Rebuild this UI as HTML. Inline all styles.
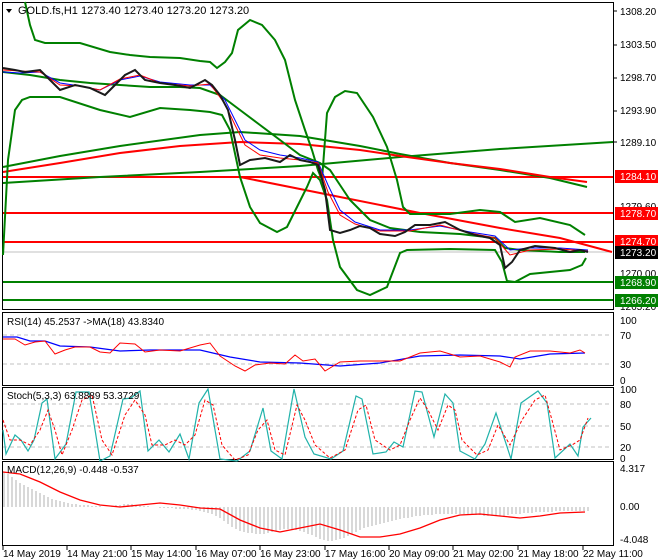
<!DOCTYPE html>
<html><head><meta charset="utf-8"><style>
html,body{margin:0;padding:0;background:#fff;}
svg{display:block;font-family:"Liberation Sans",sans-serif;}
</style></head><body>
<svg width="660" height="560" viewBox="0 0 660 560" xmlns="http://www.w3.org/2000/svg">
<rect width="660" height="560" fill="#fff"/>
<g fill="none" stroke="#000" stroke-width="1">
<rect x="2.5" y="2.5" width="611" height="307"/>
<rect x="2.5" y="312.5" width="611" height="73"/>
<rect x="2.5" y="387.5" width="611" height="72"/>
<rect x="2.5" y="461.5" width="611" height="84"/>
</g>
<g stroke="#000"><line x1="613" y1="11" x2="617" y2="11"/><line x1="613" y1="45" x2="617" y2="45"/><line x1="613" y1="78" x2="617" y2="78"/><line x1="613" y1="111" x2="617" y2="111"/><line x1="613" y1="142" x2="617" y2="142"/></g>
<line x1="3" y1="252" x2="612" y2="252" stroke="#c0c0c0"/>
<g stroke="#ff0000" stroke-width="2">
<line x1="3" y1="177" x2="613" y2="177"/>
<line x1="3" y1="213" x2="613" y2="213"/>
<line x1="3" y1="242" x2="613" y2="242"/>
</g>
<g stroke="#008000" stroke-width="2">
<line x1="3" y1="282" x2="613" y2="282"/>
<line x1="3" y1="300" x2="613" y2="300"/>
</g>
<g fill="none" stroke-width="2">
<polyline stroke="#008000" points="3,183 100,177 200,172 300,166 400,157 500,149 613,142"/>
<polyline stroke="#008000" points="3,167 60,156 120,146 200,135 240,132 300,136 360,146 400,154 450,163 500,170 550,178 587,187"/>
<polyline stroke="#ff0000" points="3,172 60,163 120,153 180,146 240,142 300,144 360,150 400,156 450,163 500,169 550,177 587,182"/>
<polyline stroke="#ff0000" points="240,177 330,195 420,213 500,228 560,238 612,252"/>
</g>
<g fill="none" stroke="#008000" stroke-width="2">
<polyline points="25,2 30,25 35,40 45,43 80,43 110,52 130,55 150,57 180,58 200,61 210,62 217,68 225,62 232,53 238,30 250,20 262,25 275,40 285,60 295,100 305,130 312,150 318,170 322,180 327,113 335,97 345,91 357,93 373,117 387,147 397,180 403,207 410,214 450,214 480,210 500,212 515,222 540,218 570,225 585,235"/>
<polyline points="3,72 30,75 60,80 90,83 120,85 150,87 180,87 200,88 220,95 240,110 260,125 280,140 300,155 320,163 330,170 340,185 350,200 360,210 370,220 390,228 420,232 460,234 495,238 505,248 520,250 560,252 585,252"/>
<polyline points="3,255 8,160 15,110 22,100 30,97 60,97 100,110 130,117 160,108 190,110 210,112 222,115 230,130 240,177 250,207 260,223 277,232 287,227 297,207 307,187 313,173 320,180 327,200 333,240 340,267 357,290 370,295 387,287 400,253 407,250 450,249 495,250 502,262 507,281 515,282 530,274 570,270 582,265 586,258"/>
</g>
<g fill="none">
<polyline stroke="#0000ff" stroke-width="1" points="3,72 20,73 40,72 60,83 80,86 100,90 120,80 140,76 160,82 190,85 210,85 225,100 235,120 245,140 260,150 280,155 300,158 318,162 328,185 340,210 355,222 380,230 410,230 440,226 470,232 495,236 510,250 530,248 560,248 588,250"/>
<polyline stroke="#ff0000" stroke-width="1" points="3,70 20,71 40,72 60,85 80,86 100,90 120,79 140,75 160,83 190,86 210,84 225,104 235,125 245,145 260,155 280,158 300,160 318,163 328,192 340,215 355,224 380,231 410,231 440,225 470,233 495,238 510,255 530,250 560,249 588,251"/>
<polyline stroke="#1a1a1a" stroke-width="2" points="3,68 15,70 25,72 40,70 50,80 60,90 75,85 90,88 105,95 115,85 125,75 135,70 145,80 160,83 175,85 190,88 205,80 212,85 220,95 228,110 235,140 240,165 250,160 265,158 280,162 290,155 300,160 310,162 318,165 325,190 330,230 340,233 350,230 360,226 370,228 380,234 395,236 405,232 415,225 430,225 445,222 460,230 475,235 490,238 500,245 505,268 512,262 520,250 535,246 555,248 570,252 580,250 588,252"/>
</g>
<polygon points="6,9 12,9 9,13" fill="#000"/>
<text x="18" y="14" font-size="11" fill="#000">GOLD.fs,H1  1273.40 1273.40 1273.20 1273.20</text>
<g font-size="10" fill="#000">
<text x="620" y="15">1308.20</text>
<text x="620" y="48">1303.50</text>
<text x="620" y="81">1298.70</text>
<text x="620" y="114">1293.90</text>
<text x="620" y="146">1289.10</text>
<text x="620" y="210">1279.60</text>
<text x="620" y="277">1270.00</text>
<text x="620" y="310">1265.20</text>
</g>
<g font-size="10" fill="#fff">
<rect x="615" y="170" width="43" height="13" fill="#ff0000"/><text x="620" y="180">1284.10</text>
<rect x="615" y="207" width="43" height="13" fill="#ff0000"/><text x="620" y="217">1278.70</text>
<rect x="615" y="235" width="43" height="13" fill="#ff0000"/><text x="620" y="245">1274.70</text>
<rect x="615" y="246" width="43" height="13" fill="#000"/><text x="620" y="256">1273.20</text>
<rect x="615" y="276" width="43" height="13" fill="#008000"/><text x="620" y="286">1268.90</text>
<rect x="615" y="294" width="43" height="13" fill="#008000"/><text x="620" y="304">1266.20</text>
</g>
<g stroke="#c0c0c0" stroke-dasharray="4,3"><line x1="3" y1="335" x2="612" y2="335"/><line x1="3" y1="364" x2="612" y2="364"/></g>
<text x="7" y="325" font-size="10">RSI(14) 45.2537  -&gt;MA(18) 43.8340</text>
<polyline fill="none" stroke="#0000ff" stroke-width="1.2" points="3,337 17,337 30,341 45,341 60,346 90,347 120,351 150,350 200,350 230,357 260,362 300,363 340,366 380,363 420,356 460,355 500,356 520,359 550,354 585,353"/>
<polyline fill="none" stroke="#ff0000" stroke-width="1" points="3,339 15,339 25,345 35,342 45,341 55,354 65,350 75,347 90,347 100,352 110,353 120,343 135,344 145,352 160,350 180,351 200,345 210,343 220,356 235,366 245,371 255,365 270,363 285,364 295,355 303,361 315,359 325,371 340,362 360,361 380,361 400,361 420,353 440,351 460,357 480,356 500,362 510,367 515,357 530,351 550,351 570,353 580,350 585,353"/>
<g font-size="10"><text x="620" y="324">100</text><text x="620" y="339">70</text><text x="620" y="368">30</text><text x="620" y="384">0</text></g>
<g stroke="#c0c0c0" stroke-dasharray="4,3"><line x1="3" y1="404" x2="612" y2="404"/><line x1="3" y1="426" x2="612" y2="426"/><line x1="3" y1="447" x2="612" y2="447"/></g>
<polyline fill="none" stroke="#20b2aa" stroke-width="1.2" points="3,430 6,454 15,435 21,440 28,451 34,440 42,403 47,399 55,459 66,444 76,392 89,392 100,461 110,456 123,399 131,398 140,391 148,451 159,440 169,452 180,434 189,459 199,403 208,389 220,459 237,461 250,451 263,408 271,451 282,459 294,389 305,437 314,454 331,459 343,451 356,396 362,399 373,454 386,452 394,442 403,447 415,391 422,392 434,437 445,394 453,403 460,451 475,459 485,444 496,413 511,459 521,403 538,391 547,403 555,458 570,444 578,456 583,427 591,418"/>
<polyline fill="none" stroke="#ff0000" stroke-width="1" stroke-dasharray="3,2" points="3,420 10,440 20,440 30,445 40,430 48,410 55,430 62,455 72,430 82,400 92,395 102,440 112,455 125,415 135,400 145,415 152,445 165,445 175,440 185,445 195,435 205,400 213,405 222,445 235,460 248,455 258,430 267,420 275,450 285,455 297,405 305,420 315,445 330,458 345,450 358,410 366,405 375,440 390,450 400,445 410,420 420,398 428,410 438,430 448,405 455,410 462,440 477,455 488,450 498,425 510,445 522,420 535,400 545,395 552,420 560,450 572,445 580,440 588,418"/>
<text x="7" y="399" font-size="10">Stoch(5,3,3) 63.8889 53.3729</text>
<g font-size="10"><text x="620" y="393">100</text><text x="620" y="408">80</text><text x="620" y="430">50</text><text x="620" y="451">20</text><text x="620" y="462">0</text></g>
<path fill="none" stroke="#b0b0b0" stroke-width="1" d="M4 507V472M8 507V474M12 507V477M16 507V480M20 507V483M24 507V485M28 507V487M32 507V489M36 507V491M40 507V493M44 507V495M48 507V497M52 507V499M56 507V500M60 507V501M64 507V502M68 507V503M72 507V504M76 507V504M80 507V505M84 507V505M88 507V505M92 507V506M96 507V506M100 507V506M112 507V506M116 507V505M120 507V505M124 507V504M128 507V504M132 507V504M136 507V505M140 507V505M144 507V506M148 507V506M160 507V508M164 507V508M168 507V508M172 507V508M176 507V509M180 507V509M184 507V509M188 507V509M192 507V510M196 507V510M200 507V511M204 507V512M208 507V513M212 507V514M216 507V516M220 507V518M224 507V521M228 507V524M232 507V527M236 507V529M240 507V531M244 507V532M248 507V533M252 507V533M256 507V534M260 507V534M264 507V534M268 507V533M272 507V532M276 507V531M280 507V530M284 507V529M288 507V529M292 507V529M296 507V530M300 507V531M304 507V532M308 507V534M312 507V535M316 507V537M320 507V539M324 507V540M328 507V541M332 507V541M336 507V540M340 507V539M344 507V538M348 507V536M352 507V534M356 507V532M360 507V530M364 507V528M368 507V527M372 507V526M376 507V525M380 507V524M384 507V523M388 507V522M392 507V521M396 507V520M400 507V519M404 507V518M408 507V518M412 507V517M416 507V516M420 507V516M424 507V515M428 507V515M432 507V515M436 507V514M440 507V514M444 507V514M448 507V514M452 507V514M456 507V514M460 507V514M464 507V514M468 507V514M472 507V515M476 507V515M480 507V515M484 507V516M488 507V516M492 507V516M496 507V516M500 507V516M504 507V516M508 507V515M512 507V514M516 507V514M520 507V514M524 507V513M528 507V513M532 507V513M536 507V512M540 507V512M544 507V512M548 507V512M552 507V512M556 507V511M560 507V511M564 507V511M568 507V511M572 507V511M576 507V511M580 507V511M584 507V511M588 507V511"/>
<polyline fill="none" stroke="#ff0000" stroke-width="1.3" points="3,472 20,474 40,482 60,492 80,500 100,505 120,507 140,505 160,503 180,505 200,508 220,509 240,520 260,528 280,532 300,528 320,524 340,530 360,537 380,537 400,534 420,528 440,520 460,515 480,514 500,516 520,518 540,516 560,513 585,512"/>
<text x="7" y="473" font-size="10">MACD(12,26,9) -0.448 -0.537</text>
<g font-size="10"><text x="620" y="472">4.317</text><text x="620" y="510">0.00</text><text x="620" y="543">-4.048</text></g>
<g stroke="#000"><line x1="3" y1="546" x2="3" y2="550"/><line x1="67" y1="546" x2="67" y2="550"/><line x1="131" y1="546" x2="131" y2="550"/><line x1="196" y1="546" x2="196" y2="550"/><line x1="260" y1="546" x2="260" y2="550"/><line x1="325" y1="546" x2="325" y2="550"/><line x1="389" y1="546" x2="389" y2="550"/><line x1="453" y1="546" x2="453" y2="550"/><line x1="518" y1="546" x2="518" y2="550"/><line x1="583" y1="546" x2="583" y2="550"/></g>
<g font-size="10">
<text x="3" y="557">14 May 2019</text><text x="67" y="557">14 May 21:00</text><text x="131" y="557">15 May 14:00</text><text x="196" y="557">16 May 07:00</text><text x="260" y="557">16 May 23:00</text><text x="325" y="557">17 May 16:00</text><text x="389" y="557">20 May 09:00</text><text x="453" y="557">21 May 02:00</text><text x="518" y="557">21 May 18:00</text><text x="583" y="557">22 May 11:00</text>
</g>
</svg>
</body></html>
